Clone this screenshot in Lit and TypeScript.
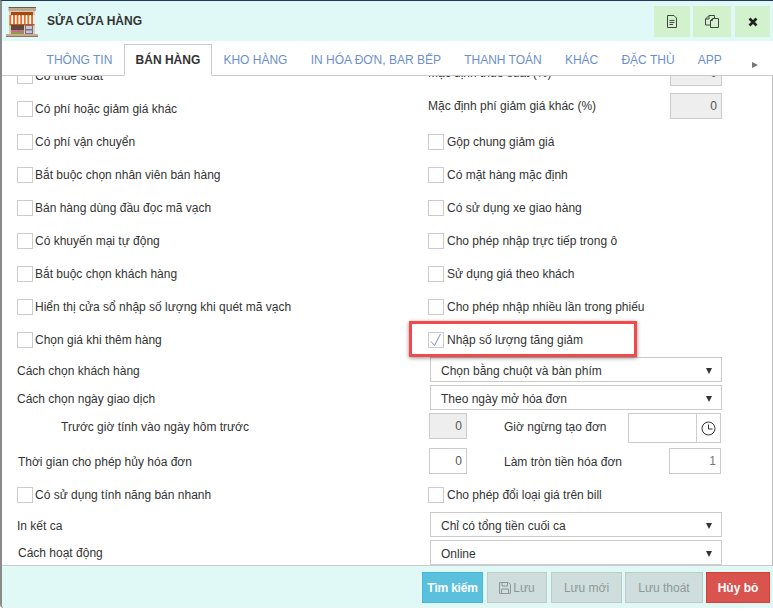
import { LitElement, html, css, svg } from "lit";
import { customElement } from "lit/decorators.js";

const leftChecks = [
  "Có phí hoặc giảm giá khác", "Có phí vận chuyển", "Bắt buộc chọn nhân viên bán hàng",
  "Bán hàng dùng đầu đọc mã vạch", "Có khuyến mại tự động", "Bắt buộc chọn khách hàng",
  "Hiển thị cửa sổ nhập số lượng khi quét mã vạch", "Chọn giá khi thêm hàng",
];
const rightChecks = [
  "Gộp chung giảm giá", "Có mặt hàng mặc định", "Có sử dụng xe giao hàng",
  "Cho phép nhập trực tiếp trong ô", "Sử dụng giá theo khách", "Cho phép nhập nhiều lần trong phiếu",
];
const tabs = ["THÔNG TIN", "BÁN HÀNG", "KHO HÀNG", "IN HÓA ĐƠN, BAR BẾP", "THANH TOÁN", "KHÁC", "ĐẶC THÙ", "APP"];

@customElement("app-root")
export class AppRoot extends LitElement {
  static styles = css`
    :host { display: block; width: 773px; height: 612px; overflow: hidden; background: #fff; font-family: "Liberation Sans", Arial, sans-serif; font-size: 12px; color: #333; }
    * { box-sizing: border-box; }
    .dialog { height: 608px; display: flex; flex-direction: column; border-top: 1px solid #1f3a5c; border-left: 2px solid #8a8a8a; border-bottom-left-radius: 4px; }
    .head { height: 40px; flex: none; background: #e0f9f6; display: flex; align-items: flex-start; padding-left: 4px; }
    .logo { width: 32px; height: 30px; flex: none; margin-top: 6px; }
    .title { font-size: 12px; font-weight: 700; margin-left: 9px; color: #333; flex: 1; line-height: 40px; }
    .tools { display: flex; margin: 5px 3px 0 0; }
    .tool { width: 36px; height: 31px; background: #d2f2cd; display: flex; align-items: center; justify-content: center; }
    .tool.t2 { width: 38px; margin-left: 3px; }
    .tool.t3 { width: 35px; margin-left: 4px; }
    .tabs { height: 35px; flex: none; display: flex; align-items: flex-end; border-bottom: 1px solid #ccc; padding-left: 33px; position: relative; }
    .tab { height: 32px; padding: 0 10.6px; line-height: 31px; font-size: 12px; color: #6b8fc9; white-space: nowrap; margin-bottom: -1px; border: 1px solid transparent; }
    .tab.on { color: #333; font-weight: 700; background: #fff; border-color: #ccc #ccc #fff; }
    .more { position: absolute; right: 15px; top: 21px; width: 0; height: 0; border-left: 6px solid #777; border-top: 3px solid transparent; border-bottom: 3px solid transparent; }
    .body { height: 490px; flex: none; overflow: hidden; position: relative; border-bottom: 1px solid #ccc; border-right: 1px solid #bbb; }
    .form { display: grid; grid-template-columns: 411px 1fr; grid-template-rows: repeat(9, 33px) 28px 28px 35px 31px 34px 28px 26px; padding: 0 50px 0 15px; margin-top: -17px; }
    .rowc { height: 33px; display: flex; align-items: center; white-space: nowrap; }
    .cb { width: 16px; height: 16px; flex: none; border: 1px solid #ccc; background: #fff; margin-right: 3px; display: flex; align-items: center; justify-content: center; }
    .lc .cb { margin-right: 2px; }
    .defrow { height: 33px; display: flex; padding-top: 1px; justify-content: space-between; white-space: nowrap; line-height: 26px; }
    .sel { height: 25px; border: 1px solid #ccc; width: 292px; margin: 1px 0 0 2px; display: flex; align-items: center; padding: 2px 9px 0 10px; justify-content: space-between; background: #fff; }
    .sel.flush { margin-top: 0; }
    .arrow { width: 0; height: 0; border-top: 6px solid #333; border-left: 3.5px solid transparent; border-right: 3.5px solid transparent; }
    .lbl { height: 28px; display: flex; align-items: center; white-space: nowrap; padding-top: 2px; }
    .lbl.short { height: 26px; padding-top: 0; }
    .lbl.plain { padding-top: 0; }
    .ind { padding-left: 44px; }
    .nudge { padding-left: 1px; }
    .num { width: 38px; height: 26px; border: 1px solid #ccc; text-align: right; padding: 0 4px 0 0; line-height: 25px; color: #555; background: #fff; flex: none; }
    .num.dis { background: #eee; }
    .num.wide { width: 52px; }
    .num.pale { color: #777; }
    .sub { display: flex; align-items: flex-start; padding: 1px 0 0 1px; line-height: 28px; white-space: nowrap; }
    .sub .t { width: 124px; margin-left: 37px; }
    .sub .t.long { width: 165px; }
    .clock { width: 93px; height: 30px; border: 1px solid #ccc; display: flex; justify-content: flex-end; }
    .clock span { width: 24px; border-left: 1px solid #ccc; display: flex; align-items: center; justify-content: center; }
    .highlight { position: absolute; left: 407px; top: 245px; width: 228px; height: 36px; border: 3px solid #f24a4a; box-shadow: 0 1px 4px rgba(0,0,0,.45); pointer-events: none; }
    .foot { height: 42px; flex: none; background: #e0f9f6; display: flex; align-items: flex-start; padding: 6px 3px 0 0; justify-content: flex-end; border-bottom-left-radius: 4px; }
    .btn { height: 31px; border: 1px solid #bfcbc9; background: #cfdedc; color: #8d9998; display: flex; align-items: center; justify-content: center; gap: 2px; font-size: 12px; }
    .b1 { width: 61px; background: #5bc0de; border-color: #46b8da; color: #fff; font-weight: 700; letter-spacing: -.2px; }
    .b2 { width: 60px; margin-left: 4px; }
    .b3 { width: 71px; margin-left: 4px; }
    .b4 { width: 78px; margin-left: 3px; }
    .b5 { width: 64px; margin-left: 3px; background: #d9534f; border-color: #d43f3a; color: #fff; font-weight: 700; }
  `;

  cb(text: string, checked = false) {
    return html`<div class="rowc"><span class="cb">${checked ? svg`<svg width="14" height="14" viewBox="0 0 14 14"><path d="M2 8.5 L5.5 12.5 L11.5 1" fill="none" stroke="#6f8fd8" stroke-width="1"/></svg>` : ""}</span>${text}</div>`;
  }

  logo() {
    const stripes = [0, 1, 2, 3, 4, 5, 6].map((i) => svg`<rect x="${3.5 + i * 3.6}" y="8" width="1.9" height="9" fill="#ee6a1c"/><rect x="${5.4 + i * 3.6}" y="8" width="1.7" height="9" fill="#fff"/>`);
    return svg`<svg class="logo" viewBox="0 0 32 30">
      <rect x="3" y="1" width="26" height="27" fill="#dccdb8"/>
      <rect x="2.5" y="0" width="27.5" height="1" fill="#6b5a49"/>
      <rect x="2.5" y="1" width="27.5" height="3" fill="#bda88f"/>
      <rect x="5" y="5" width="22" height="4" fill="#a44812"/>
      ${stripes}
      <path d="M3.5 17h25v1.4h-25z" fill="#c9521a"/>
      <rect x="5" y="18" width="13" height="9" fill="#5d4a3c"/>
      <rect x="5" y="23" width="13" height="4" fill="#8f9a4a"/>
      <rect x="6" y="23" width="3" height="2" fill="#e84fb4"/><rect x="11" y="23" width="3" height="2" fill="#e84fb4"/><rect x="15" y="24" width="2" height="2" fill="#e84fb4"/>
      <rect x="19" y="18" width="8" height="10" fill="#77708a"/>
      <rect x="20" y="19" width="6" height="3" fill="#c9c6d4"/><rect x="20" y="23.5" width="6" height="2.5" fill="#c9c6d4"/>
      <rect x="0" y="27" width="32" height="3" fill="#c8ab8c"/>
      <rect x="0" y="29" width="32" height="1" fill="#8d7660"/>
    </svg>`;
  }

  render() {
    return html`<div class="dialog">
      <div class="head">
        ${this.logo()}
        <div class="title">SỬA CỬA HÀNG</div>
        <div class="tools">
          <div class="tool"><svg width="12" height="13" viewBox="0 0 12 13"><path d="M1.5 .5H8L10.5 3V12.5H1.5Z M3.5 5.5H8.5 M3.5 7.5H8.5 M3.5 9.5H7" fill="none" stroke="#444"/></svg></div>
          <div class="tool t2"><svg width="14" height="13" viewBox="0 0 14 13"><path d="M4 .5H9.5V3.5 M4 .5L.5 4V10H5.5 M4 .5V4H.5 M7.5 3.5H13.5V12.5H5.5V5.5Z M7.5 3.5V5.5H5.5" fill="none" stroke="#444"/></svg></div>
          <div class="tool t3"><svg width="10" height="10" viewBox="0 0 10 10"><path d="M1.5 1.5L8.5 8.5M8.5 1.5L1.5 8.5" stroke="#222" stroke-width="2.6"/></svg></div>
        </div>
      </div>
      <div class="tabs">
        ${tabs.map((t) => html`<div class="tab ${t === "BÁN HÀNG" ? "on" : ""}">${t}</div>`)}
        <div class="more"></div>
      </div>
      <div class="body">
        <div class="form">
          <div class="lc">${this.cb("Có thuế suất")}</div>
          <div class="defrow"><span>Mặc định thuế suất (%)</span><span class="num dis wide">0</span></div>
          ${leftChecks.map((t, i) => html`
            <div class="lc">${this.cb(t)}</div>
            <div>${i === 0
              ? html`<div class="defrow"><span>Mặc định phí giảm giá khác (%)</span><span class="num dis wide">0</span></div>`
              : i === 7 ? this.cb("Nhập số lượng tăng giảm", true) : this.cb(rightChecks[i - 1])}</div>`)}
          <div class="lbl">Cách chọn khách hàng</div>
          <div><div class="sel">Chọn bằng chuột và bàn phím<i class="arrow"></i></div></div>
          <div class="lbl">Cách chọn ngày giao dịch</div>
          <div><div class="sel">Theo ngày mở hóa đơn<i class="arrow"></i></div></div>
          <div class="lbl ind">Trước giờ tính vào ngày hôm trước</div>
          <div class="sub"><span class="num dis">0</span><span class="t">Giờ ngừng tạo đơn</span><div class="clock"><span><svg width="15" height="15" viewBox="0 0 15 15"><circle cx="7.5" cy="7.5" r="6.5" fill="none" stroke="#333"/><path d="M7.5 3.5V8H11.5" fill="none" stroke="#333"/></svg></span></div></div>
          <div class="lbl nudge">Thời gian cho phép hủy hóa đơn</div>
          <div class="sub"><span class="num">0</span><span class="t long">Làm tròn tiền hóa đơn</span><span class="num wide pale">1</span></div>
          <div class="lc">${this.cb("Có sử dụng tính năng bán nhanh")}</div>
          <div>${this.cb("Cho phép đổi loại giá trên bill")}</div>
          <div class="lbl plain">In kết ca</div>
          <div><div class="sel flush">Chỉ có tổng tiền cuối ca<i class="arrow"></i></div></div>
          <div class="lbl short nudge">Cách hoạt động</div>
          <div><div class="sel flush">Online<i class="arrow"></i></div></div>
        </div>
        <div class="highlight"></div>
      </div>
      <div class="foot">
        <div class="btn b1">Tìm kiếm</div>
        <div class="btn b2"><svg width="12" height="12" viewBox="0 0 12 12"><path d="M.5 .5H9.5L11.5 2.5V11.5H.5Z M3 .5V4H8.5V.5 M2.5 11.5V7H9.5V11.5" fill="none" stroke="#8d9998"/></svg>Lưu</div>
        <div class="btn b3">Lưu mới</div>
        <div class="btn b4">Lưu thoát</div>
        <div class="btn b5">Hủy bỏ</div>
      </div>
    </div>`;
  }
}
